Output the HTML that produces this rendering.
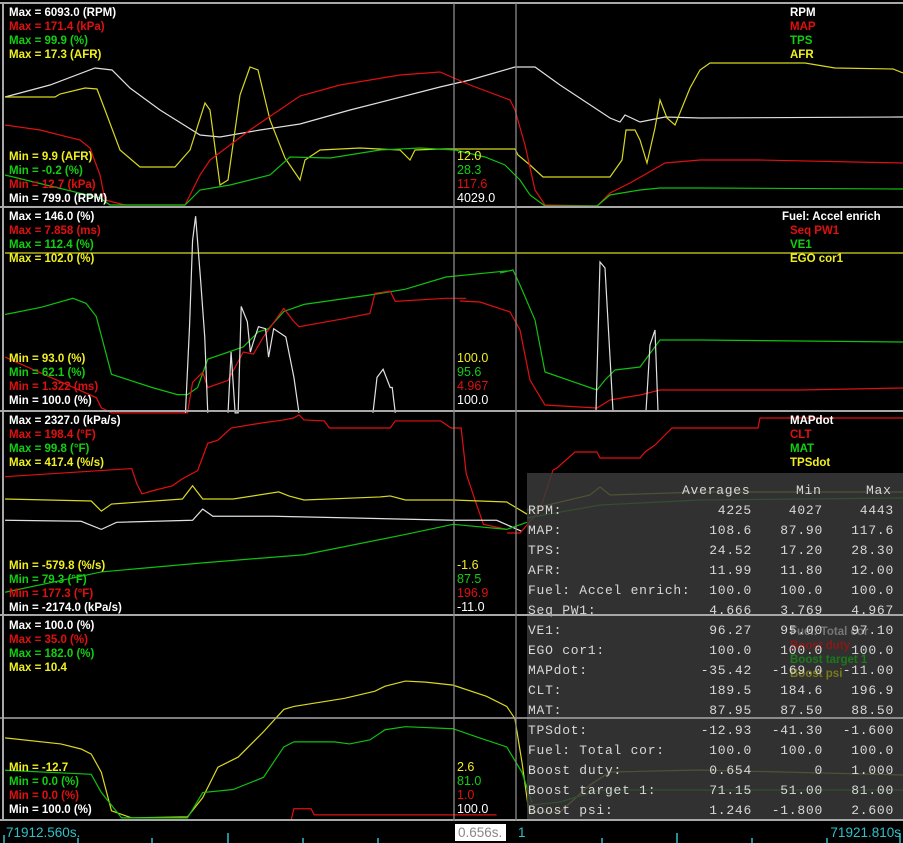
<!DOCTYPE html>
<html><head><meta charset="utf-8"><style>
html,body{margin:0;padding:0;background:#000;width:903px;height:843px;overflow:hidden}
svg{display:block}
.b{font-family:"Liberation Sans",Arial,sans-serif;font-weight:bold;font-size:11.5px}
.v{font-family:"Liberation Sans",Arial,sans-serif;font-size:12.5px}
.m{font-family:"Liberation Mono","Courier New",monospace;font-size:13px;letter-spacing:0.75px;fill:#d8d8d8}
.w{fill:#fff}.r{fill:#e01010}.g{fill:#10d010}.y{fill:#f0f020}
polyline{fill:none;stroke-width:1.2}
.lw{stroke:#e0e0e0}.lr{stroke:#e01010}.lg{stroke:#10c010}.ly{stroke:#d8d820}
</style></head><body>
<svg width="903" height="843" viewBox="0 0 903 843" xmlns="http://www.w3.org/2000/svg">
<rect width="903" height="843" fill="#000"/>
<!-- panel 1 -->
<polyline class="lw" points="5,97 50,85 95,68 112,70 130,88 160,110 200,135 220,137 260,130 300,124 350,110 440,87 470,80 515,67 535,67 560,85 610,118 620,122 625,115 640,122 665,117 700,118 903,117"/>
<polyline class="ly" points="5,97 55,97 60,94 85,88 97,89 105,110 120,150 140,167 175,167 190,150 205,103 210,110 220,185 228,180 240,95 250,67 258,70 270,120 285,158 300,180 305,160 320,150 360,148 400,150 410,160 415,150 440,149 515,149 518,155 530,165 543,177 610,177 622,160 626,130 635,130 640,140 647,163 655,128 660,100 667,118 675,125 690,88 700,70 710,63 805,63 835,68 893,69 903,73"/>
<polyline class="lr" points="5,125 40,130 80,140 90,148 100,175 105,200 125,205 185,205 200,175 210,160 250,130 300,96 340,85 400,75 440,72 470,85 510,100 515,110 525,145 535,190 545,205 597,206 610,193 630,183 665,163 700,160 760,160 903,163"/>
<polyline class="lg" points="5,175 100,198 110,205 185,205 200,190 230,185 270,175 290,157 330,158 380,150 420,148 455,150 485,157 505,165 520,180 530,195 545,206 597,206 610,195 640,190 660,188 700,188 903,189"/>
<!-- panel 2 -->
<line x1="5" y1="253" x2="903" y2="253" stroke="#d8d820" stroke-width="1.2"/>
<g transform="translate(0,200) scale(1.0135) translate(0,-200)">
<polyline class="lg" points="5,313 40,306 72,297 85,302 95,315 110,372 150,385 175,392 185,392 195,385 205,357 240,345 255,330 265,327 280,310 300,303 370,293 400,288 440,276 500,270"/>
<polyline class="lr" points="5,355 95,395 100,405 110,410 185,410 190,380 200,370 205,385 225,378 240,350 250,352 260,335 280,307 290,320 295,325 340,317 365,312 370,292 385,290 390,300 440,297 460,297"/>
<polyline class="lw" points="183,410 187,325 190,240 193,216 198,280 202,335 205,410"/>
<polyline class="lw" points="225,410 228,350 232,410 235,410 238,305 244,320 247,350 250,340 255,325 262,327 265,355 270,327 282,335 290,375 295,410"/>
<polyline class="lw" points="368,410 372,375 378,367 385,385 387,385 390,410"/>
</g>
<polyline class="lg" points="500,273 513,270 520,285 535,320 545,372 597,390 605,380 615,370 640,367 660,340 700,340 903,342"/>
<polyline class="lr" points="460,301 480,302 510,312 520,330 530,380 545,405 597,408 610,400 640,395 660,390 800,390 903,388"/>
<polyline class="lw" points="596,411 600,262 605,268 613,411"/>
<polyline class="lw" points="646,411 650,345 655,330 658,411"/>
<!-- panel 3 -->
<g transform="translate(0,200) scale(1.0135) translate(0,-200)">
<polyline class="lr" points="5,473 130,465 135,480 140,490 150,487 170,482 180,475 195,467 205,440 215,437 228,425 258,420 280,417 290,415 295,412 300,417 320,418 325,425 385,425 390,418 435,418 445,425 455,425 460,470 470,500 477,520 500,525"/>
<polyline class="ly" points="5,495 90,497 100,507 110,500 180,495 190,482 200,495 230,495 275,488 285,492 300,496 375,493 385,492 400,496 447,496 500,498 520,510"/>
<polyline class="lw" points="5,516 80,517 100,525 115,518 190,516 200,505 210,512 270,512 447,516 490,516 515,527"/>
<polyline class="lg" points="5,587 100,567 200,558 300,550 400,530 447,520 500,525 520,518"/>
</g>
<polyline class="lr" points="507,533 520,533 540,510 553,470 557,468 575,452 597,452 600,458 640,458 645,452 655,445 665,435 672,428 758,428 760,418 903,418"/>
<polyline class="ly" points="527,510 590,495 600,487 610,495 700,492 903,492"/>
<polyline class="lg" points="527,518 600,505 700,500 903,498"/>
<!-- panel 4 -->
<g transform="translate(0,600) scale(1.0135) translate(0,-600)">
<polyline class="ly" points="5,736 60,742 80,747 90,752 100,770 110,808 130,815 185,814 200,795 215,765 235,755 260,730 280,708 290,705 340,697 370,690 380,685 400,680 420,681 447,684 480,695 500,705 508,717 515,760 522,810"/>
<polyline class="lg" points="5,768 90,772 100,790 120,815 185,815 200,790 230,787 260,775 280,745 290,740 330,740 345,742 365,738 380,728 400,725 447,727 470,735 500,745 515,770 525,800"/>
<polyline class="lr" points="287,818 290,806 307,806 310,812 455,812 490,812"/>
</g>
<polyline class="ly" points="529,812 560,812 590,785 610,772 700,770 903,775"/>
<polyline class="lg" points="532,805 560,802 600,790 903,790"/>
<!-- stats box -->
<rect x="527" y="473" width="376" height="347" fill="#3a3a3a" fill-opacity="0.85"/>
<text class="b" x="790" y="635" fill="#777">Fuel: Total cor</text>
<text class="b" x="790" y="649" fill="#8a1818">Boost duty</text>
<text class="b" x="790" y="663" fill="#1a7a1a">Boost target 1</text>
<text class="b" x="790" y="677" fill="#7a7a1a">Boost psi</text>
<g class="m">
<text x="682" y="494">Averages</text><text x="796" y="494">Min</text><text x="866" y="494">Max</text>
<text x="528" y="514">RPM:</text><text x="752" y="514" text-anchor="end">4225</text><text x="823" y="514" text-anchor="end">4027</text><text x="894" y="514" text-anchor="end">4443</text>
<text x="528" y="534">MAP:</text><text x="752" y="534" text-anchor="end">108.6</text><text x="823" y="534" text-anchor="end">87.90</text><text x="894" y="534" text-anchor="end">117.6</text>
<text x="528" y="554">TPS:</text><text x="752" y="554" text-anchor="end">24.52</text><text x="823" y="554" text-anchor="end">17.20</text><text x="894" y="554" text-anchor="end">28.30</text>
<text x="528" y="574">AFR:</text><text x="752" y="574" text-anchor="end">11.99</text><text x="823" y="574" text-anchor="end">11.80</text><text x="894" y="574" text-anchor="end">12.00</text>
<text x="528" y="594">Fuel: Accel enrich:</text><text x="752" y="594" text-anchor="end">100.0</text><text x="823" y="594" text-anchor="end">100.0</text><text x="894" y="594" text-anchor="end">100.0</text>
<text x="528" y="614">Seq PW1:</text><text x="752" y="614" text-anchor="end">4.666</text><text x="823" y="614" text-anchor="end">3.769</text><text x="894" y="614" text-anchor="end">4.967</text>
<text x="528" y="634">VE1:</text><text x="752" y="634" text-anchor="end">96.27</text><text x="823" y="634" text-anchor="end">95.00</text><text x="894" y="634" text-anchor="end">97.10</text>
<text x="528" y="654">EGO cor1:</text><text x="752" y="654" text-anchor="end">100.0</text><text x="823" y="654" text-anchor="end">100.0</text><text x="894" y="654" text-anchor="end">100.0</text>
<text x="528" y="674">MAPdot:</text><text x="752" y="674" text-anchor="end">-35.42</text><text x="823" y="674" text-anchor="end">-169.0</text><text x="894" y="674" text-anchor="end">-11.00</text>
<text x="528" y="694">CLT:</text><text x="752" y="694" text-anchor="end">189.5</text><text x="823" y="694" text-anchor="end">184.6</text><text x="894" y="694" text-anchor="end">196.9</text>
<text x="528" y="714">MAT:</text><text x="752" y="714" text-anchor="end">87.95</text><text x="823" y="714" text-anchor="end">87.50</text><text x="894" y="714" text-anchor="end">88.50</text>
<text x="528" y="734">TPSdot:</text><text x="752" y="734" text-anchor="end">-12.93</text><text x="823" y="734" text-anchor="end">-41.30</text><text x="894" y="734" text-anchor="end">-1.600</text>
<text x="528" y="754">Fuel: Total cor:</text><text x="752" y="754" text-anchor="end">100.0</text><text x="823" y="754" text-anchor="end">100.0</text><text x="894" y="754" text-anchor="end">100.0</text>
<text x="528" y="774">Boost duty:</text><text x="752" y="774" text-anchor="end">0.654</text><text x="823" y="774" text-anchor="end">0</text><text x="894" y="774" text-anchor="end">1.000</text>
<text x="528" y="794">Boost target 1:</text><text x="752" y="794" text-anchor="end">71.15</text><text x="823" y="794" text-anchor="end">51.00</text><text x="894" y="794" text-anchor="end">81.00</text>
<text x="528" y="814">Boost psi:</text><text x="752" y="814" text-anchor="end">1.246</text><text x="823" y="814" text-anchor="end">-1.800</text><text x="894" y="814" text-anchor="end">2.600</text>
</g>
<!-- grid lines -->
<g stroke="#a8a8a8" stroke-width="2">
<line x1="0" y1="3" x2="903" y2="3"/>
<line x1="0" y1="207" x2="903" y2="207"/>
<line x1="0" y1="411" x2="903" y2="411"/>
<line x1="0" y1="615" x2="903" y2="615"/>
<line x1="0" y1="820" x2="903" y2="820"/>
<line x1="3" y1="3" x2="3" y2="820"/>
</g>
<line x1="0" y1="718" x2="903" y2="718" stroke="#a8a8a8" stroke-width="1.5"/>
<line x1="454" y1="3" x2="454" y2="843" stroke="#8a8a8a" stroke-width="1.3"/>
<line x1="516" y1="3" x2="516" y2="843" stroke="#8a8a8a" stroke-width="1.3"/>
<!-- labels panel 1 -->
<g class="b">
<text x="9" y="16" class="w">Max = 6093.0 (RPM)</text>
<text x="9" y="30" class="r">Max = 171.4 (kPa)</text>
<text x="9" y="44" class="g">Max = 99.9 (%)</text>
<text x="9" y="58" class="y">Max = 17.3 (AFR)</text>
<text x="9" y="160" class="y">Min = 9.9 (AFR)</text>
<text x="9" y="174" class="g">Min = -0.2 (%)</text>
<text x="9" y="188" class="r">Min = 12.7 (kPa)</text>
<text x="9" y="202" class="w">Min = 799.0 (RPM)</text>
<text x="790" y="16" class="w">RPM</text>
<text x="790" y="30" class="r">MAP</text>
<text x="790" y="44" class="g">TPS</text>
<text x="790" y="58" class="y">AFR</text>
<text x="9" y="220" class="w">Max = 146.0 (%)</text>
<text x="9" y="234" class="r">Max = 7.858 (ms)</text>
<text x="9" y="248" class="g">Max = 112.4 (%)</text>
<text x="9" y="262" class="y">Max = 102.0 (%)</text>
<text x="9" y="362" class="y">Min = 93.0 (%)</text>
<text x="9" y="376" class="g">Min = 62.1 (%)</text>
<text x="9" y="390" class="r">Min = 1.322 (ms)</text>
<text x="9" y="404" class="w">Min = 100.0 (%)</text>
<text x="782" y="220" class="w">Fuel: Accel enrich</text>
<text x="790" y="234" class="r">Seq PW1</text>
<text x="790" y="248" class="g">VE1</text>
<text x="790" y="262" class="y">EGO cor1</text>
<text x="9" y="424" class="w">Max = 2327.0 (kPa/s)</text>
<text x="9" y="438" class="r">Max = 198.4 (°F)</text>
<text x="9" y="452" class="g">Max = 99.8 (°F)</text>
<text x="9" y="466" class="y">Max = 417.4 (%/s)</text>
<text x="9" y="569" class="y">Min = -579.8 (%/s)</text>
<text x="9" y="583" class="g">Min = 79.3 (°F)</text>
<text x="9" y="597" class="r">Min = 177.3 (°F)</text>
<text x="9" y="611" class="w">Min = -2174.0 (kPa/s)</text>
<text x="790" y="424" class="w">MAPdot</text>
<text x="790" y="438" class="r">CLT</text>
<text x="790" y="452" class="g">MAT</text>
<text x="790" y="466" class="y">TPSdot</text>
<text x="9" y="629" class="w">Max = 100.0 (%)</text>
<text x="9" y="643" class="r">Max = 35.0 (%)</text>
<text x="9" y="657" class="g">Max = 182.0 (%)</text>
<text x="9" y="671" class="y">Max = 10.4</text>
<text x="9" y="771" class="y">Min = -12.7</text>
<text x="9" y="785" class="g">Min = 0.0 (%)</text>
<text x="9" y="799" class="r">Min = 0.0 (%)</text>
<text x="9" y="813" class="w">Min = 100.0 (%)</text>
</g>
<g class="v">
<text x="457" y="160" class="y">12.0</text>
<text x="457" y="174" class="g">28.3</text>
<text x="457" y="188" class="r">117.6</text>
<text x="457" y="202" class="w">4029.0</text>
<text x="457" y="362" class="y">100.0</text>
<text x="457" y="376" class="g">95.6</text>
<text x="457" y="390" class="r">4.967</text>
<text x="457" y="404" class="w">100.0</text>
<text x="457" y="569" class="y">-1.6</text>
<text x="457" y="583" class="g">87.5</text>
<text x="457" y="597" class="r">196.9</text>
<text x="457" y="611" class="w">-11.0</text>
<text x="457" y="771" class="y">2.6</text>
<text x="457" y="785" class="g">81.0</text>
<text x="457" y="799" class="r">1.0</text>
<text x="457" y="813" class="w">100.0</text>
</g>
<!-- time axis -->
<rect x="0" y="821" width="903" height="22" fill="#000"/>
<text x="6" y="837" font-family="Liberation Sans,Arial,sans-serif" font-size="13.5" fill="#30c0c8">71912.560s.</text>
<text x="901" y="837" text-anchor="end" font-family="Liberation Sans,Arial,sans-serif" font-size="13.5" fill="#30c0c8">71921.810s</text>
<text x="518" y="837" font-family="Liberation Sans,Arial,sans-serif" font-size="13.5" fill="#30c0c8">1</text>
<rect x="455" y="824" width="51" height="17" fill="#fff"/>
<text x="458" y="837" font-family="Liberation Sans,Arial,sans-serif" font-size="13.5" fill="#888">0.656s.</text>
<g stroke="#30c0c8" stroke-width="1.5">
<line x1="4" y1="835" x2="4" y2="843"/>
<line x1="78" y1="838" x2="78" y2="843"/>
<line x1="152" y1="838" x2="152" y2="843"/>
<line x1="228" y1="833" x2="228" y2="843"/>
<line x1="303" y1="838" x2="303" y2="843"/>
<line x1="378" y1="838" x2="378" y2="843"/>
<line x1="602" y1="838" x2="602" y2="843"/>
<line x1="677" y1="833" x2="677" y2="843"/>
<line x1="752" y1="838" x2="752" y2="843"/>
<line x1="827" y1="838" x2="827" y2="843"/>
<line x1="900" y1="833" x2="900" y2="843"/>
</g>
</svg>
</body></html>
